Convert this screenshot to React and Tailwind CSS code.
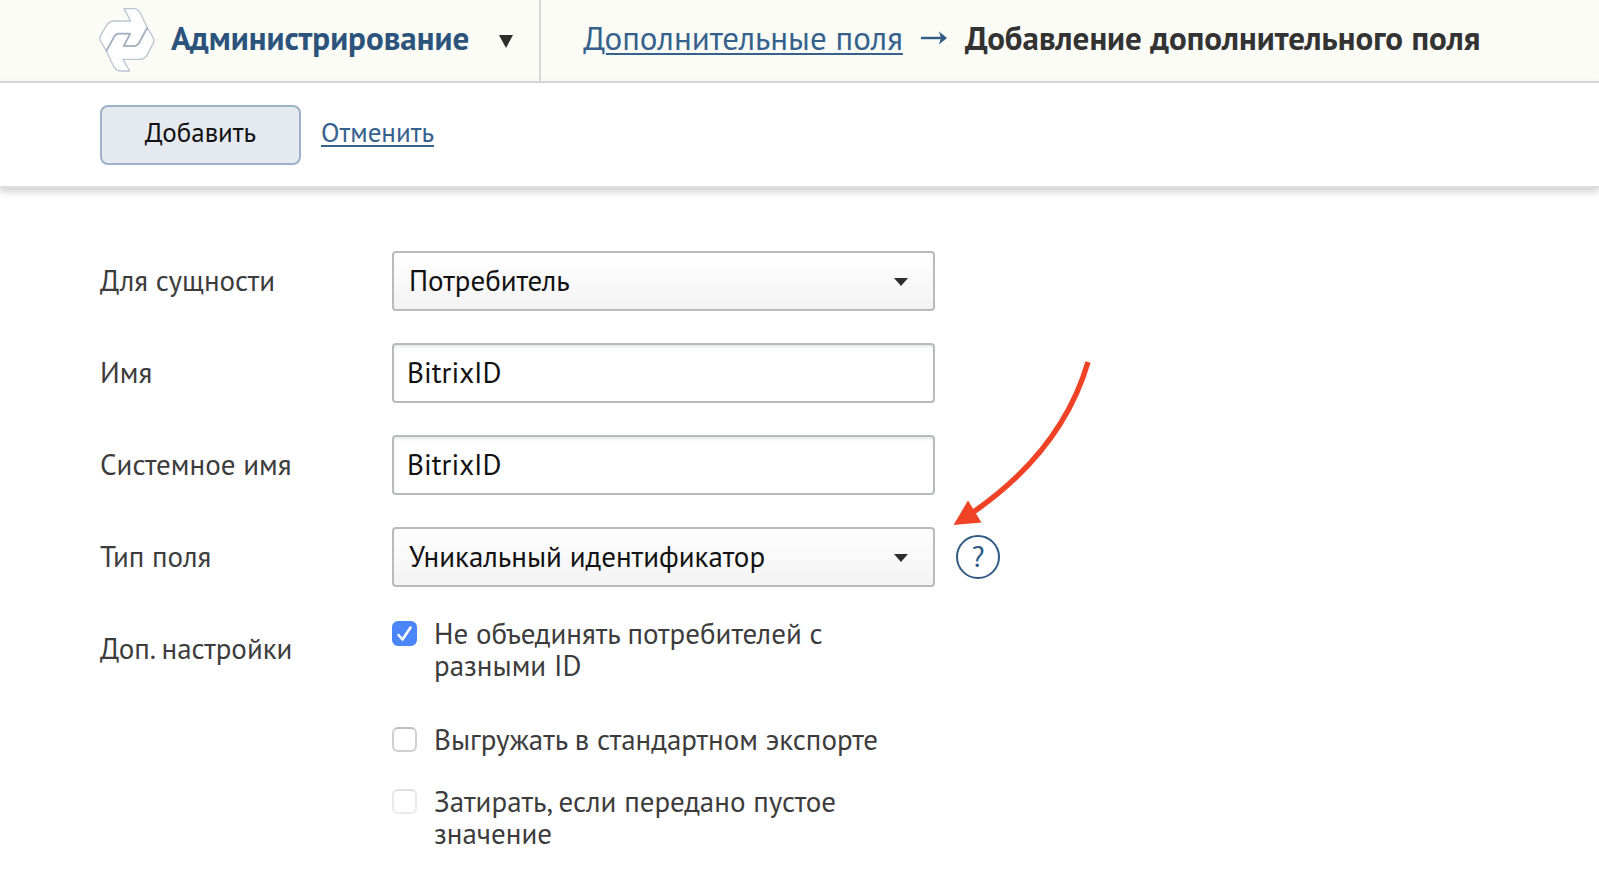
function Logo() {
  return (
    <svg width="56" height="66" viewBox="58 22 168 194" aria-hidden="true" className="shrink-0" strokeLinejoin="round" fill="#fff">
      <path
        d="M203 82 L220 111 Q225 120 220 130 L203 163 Q195 177 180 177 L130 177 L150 212 L120 212 Q109 210 103 200 L80 152 L102 112 Q108 100 118 100 L152 100 L132 137 L163 137 Q172 137 178 128 Z"
        stroke="#b9c5d3"
        strokeWidth="4"
      />
      <path
        d="M133 25 L165 25 Q175 27 182 38 L203 82 L178 128 Q172 137 163 137 L132 137 L152 100 L118 100 Q108 100 102 112 L80 152 L63 122 Q59 114 63 105 L80 76 Q89 62 105 62 L153 62 Z"
        stroke="#b9c5d3"
        strokeWidth="4"
      />
      <path
        d="M203 82 L178 128 Q172 137 163 137 L132 137 L152 100 L118 100 Q108 100 102 112 L80 152"
        fill="none"
        stroke="#a3b2c0"
        strokeWidth="5"
      />
    </svg>
  );
}

function Label({ htmlFor, children }) {
  return (
    <label htmlFor={htmlFor} className="flex h-15 items-center pb-px text-[#3c3c3c]">
      {children}
    </label>
  );
}

function TextField({ id, value }) {
  return (
    <input
      id={id}
      type="text"
      defaultValue={value}
      className="h-15 w-full rounded-[4px] border-2 border-[#b9bbbb] bg-white px-[13px] pb-[2px] text-[#111] shadow-[inset_0_3px_3px_-1px_#e6e9e9] outline-none"
    />
  );
}

function SelectField({ id, options }) {
  return (
    <div className="relative w-full">
      <select
        id={id}
        className="h-15 w-full appearance-none rounded-[4px] border-2 border-[#b9bbbb] bg-linear-to-b from-white to-[#f3f3f3] pr-14 pb-px pl-[15px] text-[#111] outline-none"
      >
        {options.map((option) => (
          <option key={option}>{option}</option>
        ))}
      </select>
      <svg width="14" height="8" viewBox="0 0 14 8" aria-hidden="true" className="pointer-events-none absolute top-[27px] right-[27px]">
        <path d="M0 0 H14 L7 8 Z" fill="#2d2d2d" />
      </svg>
    </div>
  );
}

function CheckOption({ label, checked, disabled, className = "" }) {
  return (
    <label className={`flex items-start gap-[17px] leading-8 text-[#3c3c3c] ${className}`}>
      <span className="relative mt-1 size-[25px] shrink-0">
        <input
          type="checkbox"
          defaultChecked={checked}
          disabled={disabled}
          className="peer block size-full appearance-none rounded-[6px] border-2 border-[#cfcfcf] border-t-[#bdbdbd] bg-white checked:border-[#4a86f7] checked:bg-[#4a86f7] disabled:border-[#e9e9e9] disabled:border-t-[#dedede]"
        />
        <svg
          viewBox="0 0 25 25"
          aria-hidden="true"
          className="pointer-events-none absolute inset-0 hidden size-full peer-checked:block"
        >
          <path d="M6.5 14 L10.5 18.5 L18.5 6.5" fill="none" stroke="#fff" strokeWidth="2.6" strokeLinecap="round" strokeLinejoin="round" />
        </svg>
      </span>
      <span>{label}</span>
    </label>
  );
}

function PointerArrow() {
  return (
    <svg
      width="144"
      height="172"
      viewBox="950 358 144 172"
      aria-hidden="true"
      className="pointer-events-none absolute bottom-full left-full -mb-[3px] ml-[15px]"
    >
      <path d="M1088 362 Q1062 451 972 513" fill="none" stroke="#f04326" strokeWidth="5.4" />
      <path d="M953.5 525 L968 500.5 L981.5 522.5 Z" fill="#f04326" />
    </svg>
  );
}

export default function App() {
  return (
    <div className="min-h-screen bg-white font-['PT_Sans',Lato,sans-serif] text-[29px]">
      <header className="flex h-[83px] items-stretch border-b-2 border-[#dcdddd] bg-[#fbfcf6] pl-[99px] text-[33px]">
        <button type="button" className="flex shrink-0 items-center gap-4 border-r-2 border-[#d6d8da] pr-[26px] pb-[2px] font-bold text-[#2b537c]">
          <Logo />
          <span className="pb-[3px]">Администрирование</span>
          <svg width="14" height="13" viewBox="0 0 14 13" aria-hidden="true" className="mt-1 ml-[14px]">
            <path d="M0 0 H14 L7 13 Z" fill="#2d2d2d" />
          </svg>
        </button>
        <nav className="flex min-w-0 items-center gap-[18px] pb-[5px] pl-[42px] whitespace-nowrap">
          <a href="#fields" className="text-[#35618c] underline decoration-2 underline-offset-[3px]">
            Дополнительные поля
          </a>
          <svg width="26" height="14" viewBox="0 0 26 14" aria-hidden="true" className="shrink-0">
            <path d="M0 7 H20" stroke="#2f5b85" strokeWidth="2.4" />
            <path d="M18 0.5 L26 7 L18 13.5 L20 7 Z" fill="#2f5b85" />
          </svg>
          <h1 className="font-bold text-[#333]">Добавление дополнительного поля</h1>
        </nav>
      </header>

      <div className="flex h-[105px] items-center gap-5 border-b-2 border-[#dedede] pl-[100px] text-[27px] shadow-[0_3px_8px_#00000038]">
        <button type="submit" form="field-form" className="h-15 w-[201px] rounded-lg border-2 border-[#9db2c6] bg-[#e4eaf0] pb-1 text-[#111]">
          Добавить
        </button>
        <a href="#cancel" className="pb-1 text-[#35618c] underline decoration-2 underline-offset-[3px]">
          Отменить
        </a>
      </div>

      <form
        id="field-form"
        onSubmit={(event) => event.preventDefault()}
        className="grid grid-cols-[292px_543px] gap-y-8 pt-[63px] pb-9 pl-[100px]"
      >
        <Label htmlFor="entity">Для сущности</Label>
        <SelectField id="entity" options={["Потребитель"]} />

        <Label htmlFor="name">Имя</Label>
        <TextField id="name" value="BitrixID" />

        <Label htmlFor="system-name">Системное имя</Label>
        <TextField id="system-name" value="BitrixID" />

        <Label htmlFor="type">Тип поля</Label>
        <div className="relative">
          <SelectField id="type" options={["Уникальный идентификатор"]} />
          <PointerArrow />
          <button
            type="button"
            aria-label="Справка"
            className="absolute top-2 left-full ml-[21px] flex size-11 items-center justify-center rounded-full border-2 border-[#2f5b85] pb-px text-[#2f5b85]"
          >
            ?
          </button>
        </div>

        <div id="extra" className="flex h-15 items-center pb-px text-[#3c3c3c]">Доп. настройки</div>
        <div role="group" aria-labelledby="extra" className="-mt-0.5 flex w-[500px] flex-col gap-[30px]">
          <CheckOption label="Не объединять потребителей с разными ID" checked className="mb-3 w-[440px]" />
          <CheckOption label="Выгружать в стандартном экспорте" />
          <CheckOption label="Затирать, если передано пустое значение" disabled className="w-[460px]" />
        </div>
      </form>
    </div>
  );
}
